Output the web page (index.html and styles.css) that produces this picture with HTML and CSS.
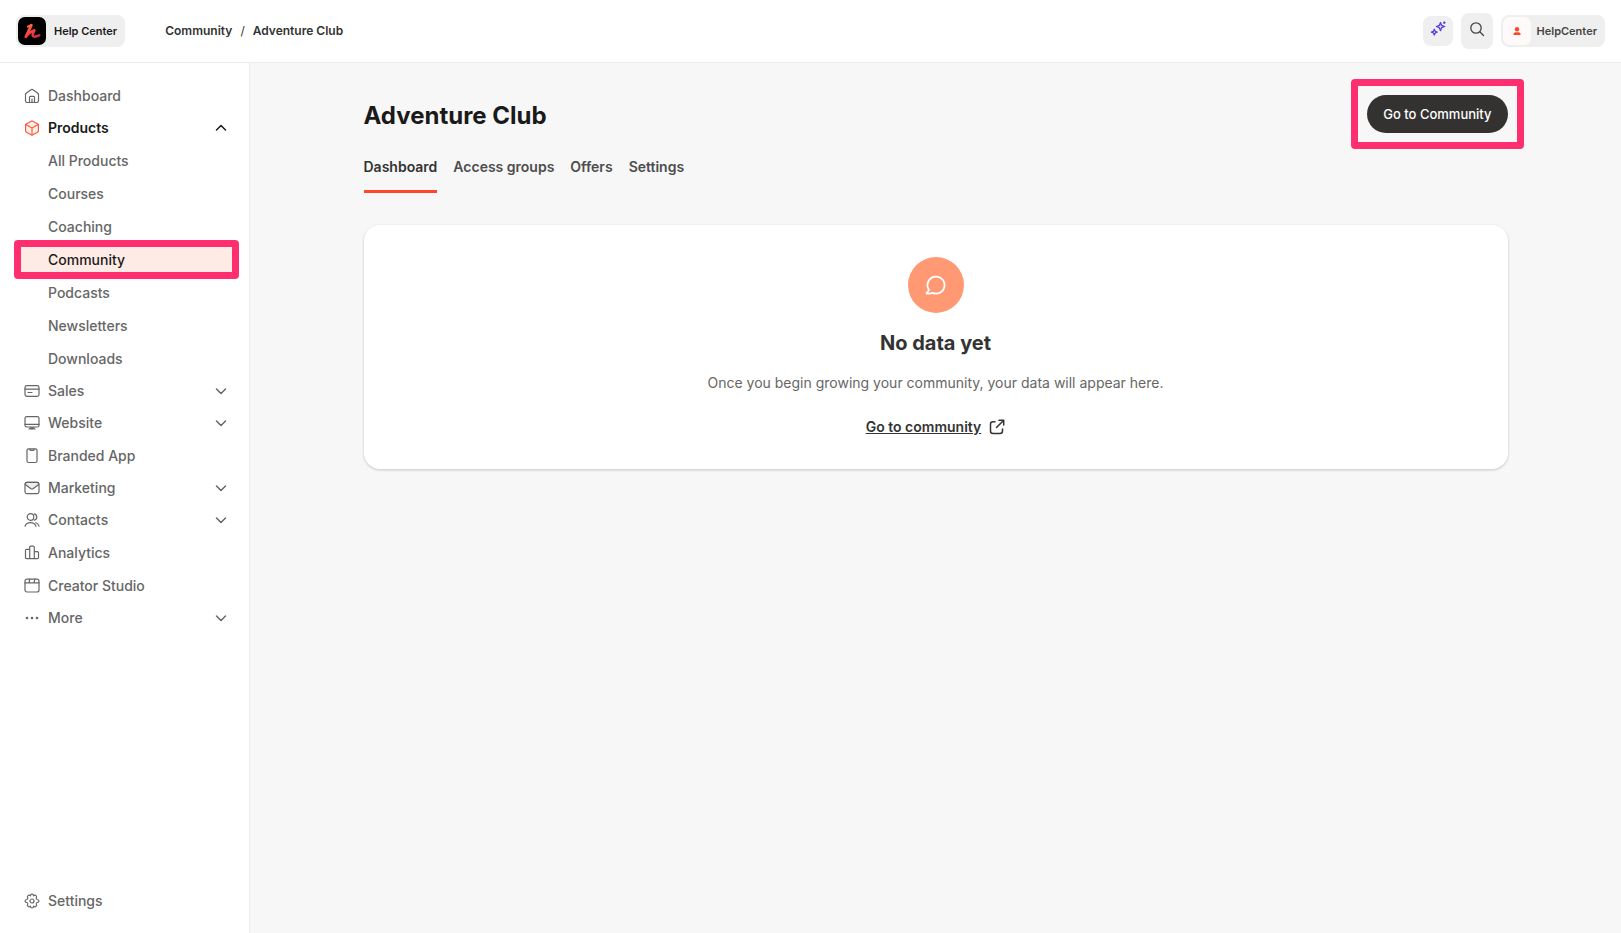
FILE: index.html
```html
<!DOCTYPE html>
<html lang="en">
<head>
    <meta charset="UTF-8">
    <meta name="viewport" content="width=device-width, initial-scale=1.0">
    <title>Adventure Club - Community</title>
    <link rel="stylesheet" href="styles.css">
</head>
<body>
    <header class="topbar">
        <div class="topbar-left">
            <button class="pill brand" type="button">
                <svg class="brand-logo" viewBox="0 0 28 28" aria-hidden="true">
                    <defs>
                        <linearGradient id="logo-fill" gradientUnits="userSpaceOnUse" x1="9" y1="7" x2="20" y2="21">
                            <stop offset="0" stop-color="#ff7a50"/>
                            <stop offset="0.55" stop-color="#fb3b3b"/>
                            <stop offset="1" stop-color="#c4265c"/>
                        </linearGradient>
                    </defs>
                    <rect width="28" height="28" rx="7" fill="#000"/>
                    <g stroke="url(#logo-fill)">
                        <path stroke-width="2.800" d="M13.300 8.300L7.800 19.800"/>
                        <path stroke-width="2" d="M9.800 9.700l3.500-1.600"/>
                        <path stroke-width="2.500" d="M8.800 18.500c2.600-2.700 4.900-4.400 7.600-5.200-1.300 2.500-2.200 4.300-1.600 5.600.7 1.200 4 .9 6.500-.7"/>
                    </g>
                </svg>
                <span>Help Center</span>
            </button>
            <nav class="breadcrumb" aria-label="Breadcrumb">
                <a href="#">Community</a>
                <span class="slash">/</span>
                <a href="#">Adventure Club</a>
            </nav>
        </div>
        <div class="topbar-right">
            <button class="icon-button sparkle" type="button" aria-label="Assistant">
                <svg viewBox="0 0 16 16" aria-hidden="true">
                    <path d="M10.500 1.500l1.200 2.900 3 1.100-3 1.200-1.200 3-1.200-3-2.900-1.200 2.900-1.100zM4.300 8.300l.9 2 2 .9-2 .8-.9 2.100-.9-2.100-2-.8 2-.9z"/>
                    <path d="M14.300 1v1.400M13.600 1.700H15"/>
                </svg>
            </button>
            <button class="icon-button search" type="button" aria-label="Search">
                <svg viewBox="0 0 16 16" aria-hidden="true">
                    <circle cx="7" cy="7" r="5.200"/>
                    <path d="M10.800 10.800l3.700 3.700"/>
                </svg>
            </button>
            <button class="pill profile" type="button">
                <span class="avatar">
                    <svg viewBox="0 0 10 10" aria-hidden="true">
                        <circle cx="5" cy="3.200" r="2.200"/>
                        <path d="M1.500 9V8.100C1.500 6.900 2.500 6.200 3.700 6.200h2.600c1.200 0 2.200.7 2.200 1.900V9z"/>
                    </svg>
                </span>
                <span>HelpCenter</span>
            </button>
        </div>
    </header>

    <div class="layout">
        <nav class="sidebar" aria-label="Main">
            <a class="nav-link" href="#">
                <svg class="icon" viewBox="0 0 16 16"><path d="M1.500 7.200v5.600c0 1.100.7 1.700 1.700 1.700h9.600c1 0 1.700-.6 1.700-1.700V6.700c0-.6-.2-1-.7-1.400L9 1.700c-.6-.5-1.400-.5-2 0L2.200 5.300c-.5.400-.7.800-.7 1.400zM5.500 14.500V9.200c0-.6.300-.9.900-.9h3.200c.6 0 .9.300.9.900v5.300M8 11v3.500"/></svg>
                <span>Dashboard</span>
            </a>
            <button class="nav-group open" type="button" aria-expanded="true">
                <svg class="icon" viewBox="0 0 16 16"><path fill="#fff0ec" d="M7.200 1.200c.5-.3 1.100-.3 1.600 0l4.700 2.600c.6.300.9.800.9 1.400v5.600c0 .6-.3 1.100-.9 1.400l-4.700 2.600c-.5.300-1.100.3-1.600 0l-4.700-2.600c-.6-.3-.9-.8-.9-1.400V5.200c0-.6.3-1.100.9-1.400z"/><path d="M1.900 4.500L8 8l6.100-3.500M8 8v7"/></svg>
                <span>Products</span>
                <svg class="chevron" viewBox="0 0 16 16"><path d="M3.500 10L8 5.500l4.500 4.500"/></svg>
            </button>
            <a class="nav-link sub" href="#">All Products</a>
            <a class="nav-link sub" href="#">Courses</a>
            <a class="nav-link sub" href="#">Coaching</a>
            <a class="nav-link sub active" href="#">Community</a>
            <a class="nav-link sub" href="#">Podcasts</a>
            <a class="nav-link sub" href="#">Newsletters</a>
            <a class="nav-link sub" href="#">Downloads</a>
            <button class="nav-group" type="button" aria-expanded="false">
                <svg class="icon" viewBox="0 0 16 16"><rect x="1" y="2.700" width="14" height="10.600" rx="1.800"/><path d="M1 6.200h14M4 9.500h4"/></svg>
                <span>Sales</span>
                <svg class="chevron" viewBox="0 0 16 16"><path d="M3.500 6L8 10.500 12.500 6"/></svg>
            </button>
            <button class="nav-group" type="button" aria-expanded="false">
                <svg class="icon" viewBox="0 0 16 16"><rect x="1" y="1.700" width="14" height="10.300" rx="1.800"/><path d="M1 9.300h14M5 14h6M6 12.900h4"/></svg>
                <span>Website</span>
                <svg class="chevron" viewBox="0 0 16 16"><path d="M3.500 6L8 10.500 12.500 6"/></svg>
            </button>
            <a class="nav-link" href="#">
                <svg class="icon" viewBox="0 0 16 16"><rect x="3" y=".8" width="10" height="13.700" rx="1.500"/><path d="M5.800 1v.6c0 .5.300.8.8.8h2.800c.5 0 .8-.3.800-.8V1"/></svg>
                <span>Branded App</span>
            </a>
            <button class="nav-group" type="button" aria-expanded="false">
                <svg class="icon" viewBox="0 0 16 16"><rect x="1" y="2.400" width="14" height="11.200" rx="1.800"/><path fill="#ededed" d="M1.200 4.500L7 8.800c.6.400 1.400.4 2 0l5.800-4.300c-.1-1.300-.7-2.100-1.800-2.100H3C1.900 2.400 1.300 3.200 1.200 4.500z"/></svg>
                <span>Marketing</span>
                <svg class="chevron" viewBox="0 0 16 16"><path d="M3.500 6L8 10.500 12.500 6"/></svg>
            </button>
            <button class="nav-group" type="button" aria-expanded="false">
                <svg class="icon" viewBox="0 0 16 16"><circle cx="6.500" cy="5" r="3.300"/><path d="M10.300 1.800a3.300 3.300 0 0 1 0 6.400M1 14.200c.9-2.300 2.900-3.500 5.500-3.500s4.600 1.200 5.500 3.500M11.800 10.700c1.600.5 2.700 1.700 3.200 3.500"/></svg>
                <span>Contacts</span>
                <svg class="chevron" viewBox="0 0 16 16"><path d="M3.500 6L8 10.500 12.500 6"/></svg>
            </button>
            <a class="nav-link" href="#">
                <svg class="icon" viewBox="0 0 16 16"><path d="M5.700 13.700V2.300c0-.7.400-1.100 1.100-1.100h2.400c.7 0 1.100.4 1.100 1.100v11.400zM5.700 4.300H2.600c-.7 0-1.100.4-1.100 1.100v7.200c0 .7.400 1.100 1.100 1.100h3.100M10.300 6.700h3.100c.7 0 1.100.4 1.100 1.100v4.800c0 .7-.4 1.100-1.100 1.100h-3.100"/></svg>
                <span>Analytics</span>
            </a>
            <a class="nav-link" href="#">
                <svg class="icon" viewBox="0 0 16 16"><rect x="1" y="1.200" width="14" height="12.800" rx="2"/><path d="M1 4.900h14M5.800 1.200L5 4.900M10.800 1.200l-.8 3.700"/></svg>
                <span>Creator Studio</span>
            </a>
            <button class="nav-group" type="button" aria-expanded="false">
                <svg class="icon dots" viewBox="0 0 16 16"><circle cx="3" cy="8" r="1.300"/><circle cx="8" cy="8" r="1.300"/><circle cx="13" cy="8" r="1.300"/></svg>
                <span>More</span>
                <svg class="chevron" viewBox="0 0 16 16"><path d="M3.500 6L8 10.500 12.500 6"/></svg>
            </button>
            <a class="nav-link nav-bottom" href="#">
                <svg class="icon" viewBox="0 0 16 16"><circle cx="8" cy="8" r="2"/><path d="M6.400 2.800C6.600.5 9.400.5 9.600 2.800c1.800-1.500 3.800.4 2.600 2.200 0 .7.500 1.300 1.100 1.500 2.200.3 2.200 2.700 0 3-.6.200-1.100.8-1.100 1.500 1.200 1.800-.8 3.700-2.600 2.200-.2 2.300-3 2.300-3.200 0-1.800 1.500-3.800-.4-2.600-2.200 0-.7-.5-1.300-1.100-1.500-2.200-.3-2.200-2.700 0-3 .6-.2 1.100-.8 1.100-1.500-1.200-1.800.8-3.700 2.600-2.200z"/></svg>
                <span>Settings</span>
            </a>
        </nav>

        <main class="main">
            <div class="content">
                <div class="page-header">
                    <h1>Adventure Club</h1>
                    <div class="callout">
                        <button class="primary-button" type="button">Go to Community</button>
                    </div>
                </div>
                <nav class="tabs" aria-label="Community sections">
                    <a class="tab selected" href="#">Dashboard</a>
                    <a class="tab" href="#">Access groups</a>
                    <a class="tab" href="#">Offers</a>
                    <a class="tab" href="#">Settings</a>
                </nav>
                <section class="card">
                    <div class="card-icon">
                        <svg viewBox="0 0 24 24" aria-hidden="true"><path d="M4.300 17.300A9.300 9.300 0 1 1 8.200 20.600C6.500 21 4.500 21.600 2.300 21.400c-.6 0-.7-.5-.4-.9.900-.9 2.200-2.200 2.400-3.200z"/></svg>
                    </div>
                    <h2>No data yet</h2>
                    <p>Once you begin growing your community, your data will appear here.</p>
                    <a class="card-link" href="#">
                        <span>Go to community</span>
                        <svg viewBox="0 0 16 16" aria-hidden="true"><path d="M6 2.700H4C2.300 2.700 1.500 3.500 1.500 5v7c0 1.700.8 2.500 2.500 2.500h7c1.700 0 2.500-.8 2.500-2.500v-2M7.500 8.500L14.300 1.700M10 1.300h4.700V6"/></svg>
                    </a>
                </section>
            </div>
        </main>
    </div>
</body>
</html>
```
FILE: styles.css
```css
* {
    box-sizing: border-box;
}
body {
    margin: 0;
    min-height: 100vh;
    display: flex;
    flex-direction: column;
    font-family: Inter, "Liberation Sans", sans-serif;
    font-size: 14px;
    line-height: 20px;
    color: #333;
    background: #f7f7f7;
}
a {
    color: inherit;
    text-decoration: none;
}
button {
    font: inherit;
    color: inherit;
    border: none;
    background: none;
    padding: 0;
    cursor: pointer;
}
svg {
    display: block;
    flex-shrink: 0;
    fill: none;
    stroke-linecap: round;
    stroke-linejoin: round;
}

/* Top bar */
.topbar {
    display: flex;
    justify-content: space-between;
    align-items: center;
    height: 63px;
    padding: 0 16px;
    background: #fff;
    border-bottom: 1px solid #ececec;
}
.topbar-left {
    display: flex;
    align-items: center;
    gap: 40px;
}
.topbar-right {
    display: flex;
    align-items: center;
    gap: 8px;
}
.pill {
    display: flex;
    align-items: center;
    height: 32px;
    padding: 2px 8px 2px 2px;
    border-radius: 8px;
    background: #efefef;
    font-size: 11px;
    font-weight: 600;
}
.brand {
    gap: 8px;
    color: #1a1a1a;
}
.brand-logo {
    width: 28px;
    height: 28px;
}
.breadcrumb {
    display: flex;
    gap: 8px;
    font-size: 12px;
    font-weight: 600;
}
.slash {
    font-weight: 400;
}
.icon-button {
    display: flex;
    justify-content: center;
    border-radius: 8px;
    background: #efefef;
}
.icon-button svg {
    width: 16px;
    height: 16px;
    stroke: #444;
    stroke-width: 1.3;
}
.sparkle {
    width: 30px;
    height: 30px;
    padding-top: 5px;
}
.sparkle svg {
    stroke: #5b3fe0;
    fill: #dcd5fa;
}
.search {
    width: 32px;
    height: 36px;
    padding-top: 8px;
}
.profile {
    gap: 6px;
    color: #444;
}
.avatar {
    display: flex;
    align-items: center;
    justify-content: center;
    width: 28px;
    height: 28px;
    border-radius: 7px;
    background: #fffafa;
}
.avatar svg {
    width: 10px;
    height: 10px;
    fill: #ff4628;
}

/* Sidebar */
.layout {
    display: flex;
    flex: 1;
}
.sidebar {
    display: flex;
    flex-direction: column;
    flex-shrink: 0;
    width: 250px;
    padding: 16px 0;
    background: #fff;
    border-right: 1px solid #ececec;
}
.nav-link,
.nav-group {
    display: flex;
    align-items: center;
    gap: 8px;
    height: 33px;
    padding: 0 20px 0 24px;
    font-weight: 500;
    color: #666;
    text-align: left;
}
.nav-group {
    height: 32px;
}
.icon {
    width: 16px;
    height: 16px;
    stroke: currentColor;
    stroke-width: 1.2;
}
.dots {
    fill: currentColor;
    stroke: none;
}
.chevron {
    width: 16px;
    height: 16px;
    margin-left: auto;
    stroke: currentColor;
    stroke-width: 1.5;
}
.open {
    font-weight: 600;
    color: #1a1a1a;
}
.open .icon {
    stroke: #ff5a3c;
}
.sub {
    padding-left: 48px;
}
.active {
    position: relative;
    z-index: 0;
    color: #1a1a1a;
}
.active::before {
    content: "";
    position: absolute;
    z-index: -1;
    inset: -3px 10px -3px 14px;
    border: 7px solid #ff2e6e;
    border-radius: 4px;
    background: #ffebe5;
}
.nav-bottom {
    margin-top: auto;
}

/* Page */
.main {
    flex: 1;
    padding: 32px 16px;
}
.content {
    max-width: 1144px;
    margin: 0 auto;
}
.page-header {
    display: flex;
    justify-content: space-between;
    align-items: flex-end;
}
h1,
h2,
p {
    margin: 0;
}
h1 {
    font-size: 24px;
    line-height: 34px;
    font-weight: 700;
    color: #1a1a1a;
}
.callout {
    position: relative;
}
.callout::after {
    content: "";
    position: absolute;
    inset: -16px;
    border: 7px solid #ff2e6e;
    border-radius: 4px;
    pointer-events: none;
}
.primary-button {
    display: block;
    height: 38px;
    padding: 0 16px;
    border-radius: 19px;
    background: #333230;
    color: #fff;
    font-size: 13px;
    font-weight: 500;
}
.tabs {
    display: flex;
    gap: 16px;
    margin-top: 24px;
    font-weight: 600;
    color: #4d4d4d;
}
.tab {
    padding-bottom: 13px;
    border-bottom: 3px solid transparent;
}
.selected {
    color: #333;
    border-color: #ff4628;
}
.card {
    display: flex;
    flex-direction: column;
    align-items: center;
    margin-top: 32px;
    padding: 32px;
    border-radius: 16px;
    background: #fff;
    box-shadow: 0 1px 3px rgba(0, 0, 0, 0.2);
}
.card-icon {
    display: flex;
    align-items: center;
    justify-content: center;
    width: 56px;
    height: 56px;
    border-radius: 50%;
    background: #ff9973;
}
.card-icon svg {
    width: 22px;
    height: 22px;
    stroke: #fff;
    stroke-width: 2;
}
.card h2 {
    margin-top: 16px;
    font-size: 20px;
    line-height: 28px;
    font-weight: 700;
}
.card p {
    margin-top: 16px;
    color: #666;
}
.card-link {
    display: flex;
    align-items: center;
    gap: 8px;
    margin-top: 24px;
    font-weight: 600;
}
.card-link span {
    text-decoration: underline;
}
.card-link svg {
    width: 16px;
    height: 16px;
    stroke: #333;
    stroke-width: 1.5;
}
```
